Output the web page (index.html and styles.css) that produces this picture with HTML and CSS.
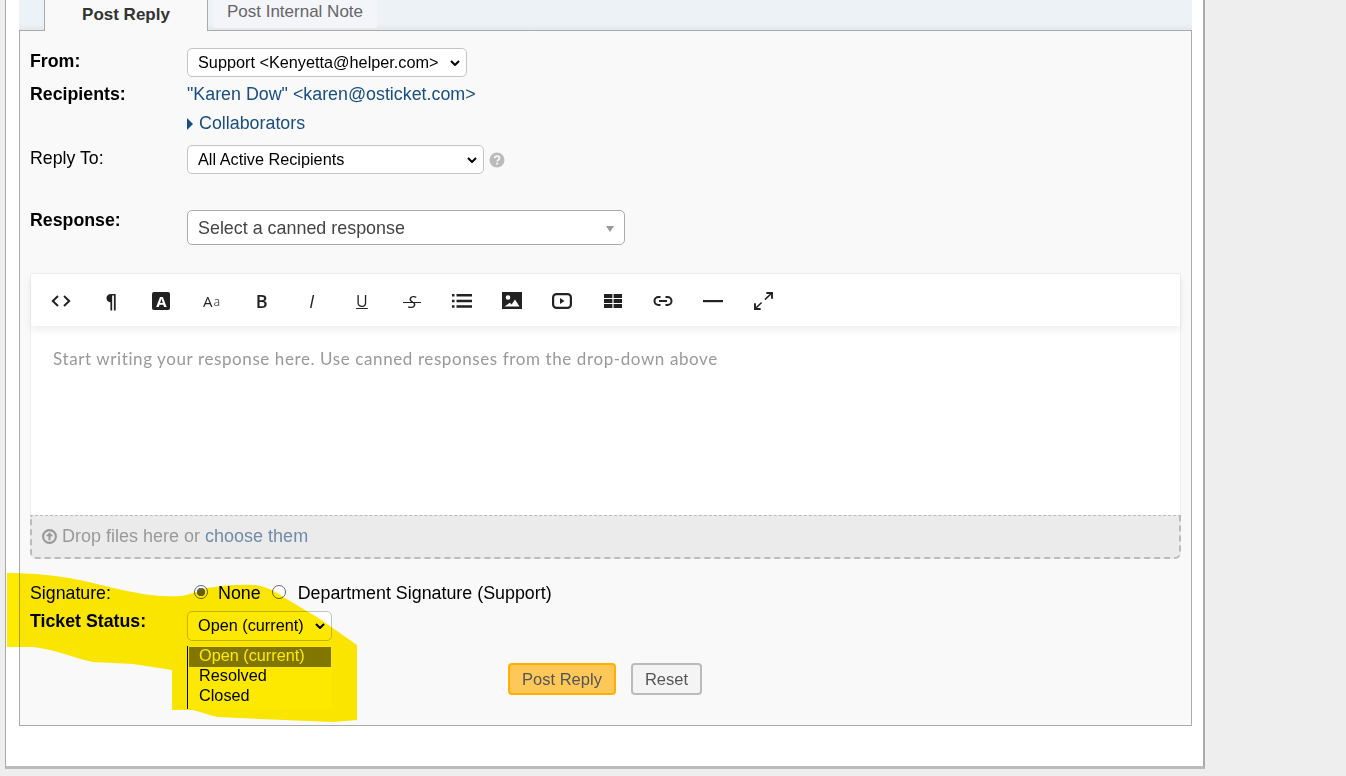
FILE: index.html
```html
<!DOCTYPE html>
<html lang="en">
<head>
    <meta charset="UTF-8">
    <title>Post Reply</title>
    <link rel="stylesheet" href="styles.css">
</head>
<body>
    <div id="page">
        <div class="tabs">
            <div class="tab active">Post Reply</div>
            <div class="tab">Post Internal Note</div>
        </div>
        <div class="panel">
            <div class="row row-from">
                <label class="lbl bold">From:</label>
                <div class="sel-wrap">
                    <select class="sel sel-from"><option>Support &lt;Kenyetta@helper.com&gt;</option></select>
                    <svg class="chev" width="10" height="6" viewBox="0 0 10 6"><path d="M1 1l4 4 4-4" fill="none" stroke="#000" stroke-width="2"/></svg>
                </div>
            </div>
            <div class="row row-text">
                <label class="lbl bold">Recipients:</label>
                <a class="link">"Karen Dow" &lt;karen@osticket.com&gt;</a>
            </div>
            <div class="row row-text row-collab">
                <span></span>
                <a class="link"><i class="caret"></i>Collaborators</a>
            </div>
            <div class="row row-reply">
                <label class="lbl">Reply To:</label>
                <div class="inline">
                    <div class="sel-wrap">
                        <select class="sel sel-reply"><option>All Active Recipients</option></select>
                        <svg class="chev" width="10" height="6" viewBox="0 0 10 6"><path d="M1 1l4 4 4-4" fill="none" stroke="#000" stroke-width="2"/></svg>
                    </div>
                    <svg class="help" width="16" height="16" viewBox="0 0 16 16"><circle cx="8" cy="8" r="7.5" fill="#bbb"/><path d="M5.6 6.2c.2-1.400 1.200-2.100 2.500-2.100 1.400 0 2.400.8 2.400 2 0 1.800-2.200 1.700-2.200 3.400" fill="none" stroke="#f9f9f9" stroke-width="1.800"/><rect x="7.200" y="10.700" width="1.900" height="1.900" fill="#f9f9f9"/></svg>
                </div>
            </div>
            <div class="row row-response">
                <label class="lbl bold">Response:</label>
                <div class="canned">Select a canned response<i class="canned-arrow"></i></div>
            </div>

            <div class="editor">
                <div class="toolbar">
                    <span class="tool"><svg width="20" height="12" viewBox="0 0 20 12"><path d="M7 1 1.800 6 7 11M13 1l5.200 5L13 11" fill="none" stroke="#222" stroke-width="2"/></svg></span>
                    <span class="tool tool-text para">¶</span>
                    <span class="tool"><span class="box-a">A</span></span>
                    <span class="tool tool-text size">A<small>a</small></span>
                    <span class="tool tool-text strong">B</span>
                    <span class="tool tool-text em">I</span>
                    <span class="tool tool-text under">U</span>
                    <span class="tool tool-text strike">S</span>
                    <span class="tool"><svg width="20" height="14" viewBox="0 0 20 14"><path d="M0 0h2.500v2.500H0zM0 5.700h2.500v2.500H0zM0 11.300h2.500v2.500H0zM4.500 0H20v2.500H4.500zM4.500 5.700H20v2.500H4.500zM4.500 11.300H20v2.500H4.500z" fill="#222"/></svg></span>
                    <span class="tool"><svg width="20" height="18" viewBox="0 0 20 18"><path fill-rule="evenodd" d="M0 0h20v17H0zM6 3.200a2.300 2.300 0 1 0 0 4.600 2.300 2.300 0 0 0 0-4.600zM2.500 14.500h15l-4.500-7-3.400 5-1.700-1.800z" fill="#222"/></svg></span>
                    <span class="tool"><svg width="20" height="16" viewBox="0 0 20 16"><rect x="1.100" y="1.100" width="17.800" height="13.800" rx="3.500" fill="none" stroke="#222" stroke-width="2.200"/><path d="M8 5v6l4.500-3z" fill="#222"/></svg></span>
                    <span class="tool"><svg width="18" height="14" viewBox="0 0 18 14"><path d="M0 0h8.400v4H0zM9.600 0H18v4H9.600zM0 5h8.400v4H0zM9.600 5H18v4H9.600zM0 10h8.400v4H0zM9.600 10H18v4H9.600z" fill="#222"/></svg></span>
                    <span class="tool"><svg width="20" height="12" viewBox="0 0 20 12"><path d="M7.500 2H5.500a4 4 0 0 0 0 8h2M12.500 2h2a4 4 0 0 1 0 8h-2" fill="none" stroke="#222" stroke-width="2"/><path d="M6 5h8v2H6z" fill="#222"/></svg></span>
                    <span class="tool"><svg width="20" height="3" viewBox="0 0 20 3"><path d="M0 0h20v2.200H0z" fill="#222"/></svg></span>
                    <span class="tool"><svg width="19" height="18" viewBox="0 0 20 19"><path d="M11.500 8 18 1.800M1.500 17.500 8 11" fill="none" stroke="#222" stroke-width="1.600"/><path d="M13 1h6v6M1 12v6h6" fill="none" stroke="#222" stroke-width="2"/></svg></span>
                </div>
                <div class="editor-body">Start writing your response here. Use canned responses from the drop-down above</div>
            </div>
            <div class="drop">
                <svg width="15" height="15" viewBox="0 0 14 14"><circle cx="7" cy="7" r="6" fill="none" stroke="#999" stroke-width="2"/><path d="M7 3 3.500 6.800H6V10.500h2V6.800h2.500z" fill="#999"/></svg>
                <span>Drop files here or <a class="choose">choose them</a></span>
            </div>

            <div class="row row-sign">
                <label class="lbl">Signature:</label>
                <div class="radios">
                    <i class="radio on"></i><span class="radio-none">None</span>
                    <i class="radio"></i><span>Department Signature (Support)</span>
                </div>
            </div>
            <div class="row row-status">
                <label class="lbl bold">Ticket Status:</label>
                <div class="sel-wrap">
                    <select class="sel sel-status"><option>Open (current)</option></select>
                    <svg class="chev" width="10" height="6" viewBox="0 0 10 6"><path d="M1 1l4 4 4-4" fill="none" stroke="#000" stroke-width="2"/></svg>
                </div>
                <ul class="options">
                    <li class="selected">Open (current)</li>
                    <li>Resolved</li>
                    <li>Closed</li>
                </ul>
            </div>
            <div class="buttons">
                <button class="btn primary">Post Reply</button>
                <button class="btn reset">Reset</button>
            </div>
        </div>
    </div>
    <!-- marker scribble drawn over the screenshot -->
    <svg class="marker" width="1346" height="776" viewBox="0 0 1346 776"><path d="M7 573C30 573 60 575 93 583 110 587 120 590 133 592 150 596 170 597 180 596 192 595 198 590 207 588 225 585 240 584 253 585 265 586 275 591 283 597 295 604 305 610 317 617L357 645V720L333 722 260 719 217 717 193 710H172V670L133 664 93 662C75 658 60 652 50 650 40 648 35 647 33 647H7z" fill="#ffeb00"/></svg>
</body>
</html>
```

FILE: styles.css
```css
*{
    box-sizing:border-box;
    padding:0;
    margin:0;
}
html,body{
    height:776px;
    overflow:hidden;
}
body{
    background-color:#eee;
    font-family:"Liberation Sans",Arial,sans-serif;
    font-size:17.750px;
    color:#000;
}
#page{
    width:1200px;
    height:769px;
    margin-left:5px;
    padding:0 11px 0 13px;
    background-color:#fff;
    border-left:1px solid #aaa;
    border-right:2px solid #aaa;
    border-bottom:3px solid #bbb;
}
.tabs{
    display:flex;
    align-items:flex-start;
    height:30px;
    padding-left:25px;
    background:linear-gradient(#edf2f6 80%,#e3e8ec);
    position:relative;
    z-index:1;
}
.tab{
    width:164px;
    height:28px;
    margin-right:5px;
    line-height:24px;
    text-align:center;
    font-size:17px;
    color:#666;
    background-color:#f3f5f9;
}
.tab.active{
    height:31px;
    line-height:29px;
    font-weight:bold;
    color:#333;
    background-color:#f9f9f9;
    border:1px solid #aaa;
    border-top:0;
    border-bottom:0;
}
.panel{
    height:696px;
    padding:17px 10px 0;
    background-color:#f9f9f9;
    border:1px solid #aaa;
}
.row{
    display:grid;
    grid-template-columns:157px auto;
    justify-content:start;
}
.lbl{
    line-height:26px;
}
.bold{
    font-weight:bold;
}
.sel-wrap{
    position:relative;
    height:29px;
}
.sel{
    display:block;
    height:29px;
    padding:0 0 2px 10px;
    font-family:"Liberation Sans",Arial,sans-serif;
    font-size:16.250px;
    color:#000;
    background-color:#fff;
    border:1px solid #c4c4c4;
    border-radius:5px;
    appearance:none;
    -webkit-appearance:none;
}
.chev{
    position:absolute;
    right:7px;
    top:12px;
    pointer-events:none;
}
.sel-from{
    width:280px;
}
.sel-reply{
    width:297px;
}
.row-text{
    height:29px;
    line-height:34px;
    font-size:17.850px;
}
.row-text .lbl{
    line-height:34px;
    font-size:17.750px;
}
.link{
    color:#184e81;
}
.caret{
    display:inline-block;
    margin-right:6px;
    border-left:6px solid #184e81;
    border-top:6px solid transparent;
    border-bottom:6px solid transparent;
    vertical-align:-1px;
}
.row-reply{
    margin-top:10px;
}
.row-reply .lbl{
    line-height:26px;
}
.inline{
    display:flex;
    align-items:center;
    gap:5px;
}
.row-response{
    margin-top:36px;
}
.row-response .lbl{
    line-height:20px;
}
.canned{
    display:flex;
    align-items:center;
    justify-content:space-between;
    width:438px;
    height:35px;
    padding:2px 10px 0;
    font-size:17.900px;
    color:#444;
    background-color:#fff;
    border:1px solid #aaa;
    border-radius:5px;
}
.canned-arrow{
    border-top:6px solid #999;
    border-left:4.500px solid transparent;
    border-right:4.500px solid transparent;
}
.editor{
    height:242px;
    margin-top:28px;
    background-color:#fff;
    border:1px solid #eee;
    border-bottom:0;
}
.toolbar{
    display:flex;
    align-items:center;
    height:52px;
    padding-left:5px;
    box-shadow:0 4px 8px rgba(0,0,0,0.07);
}
.tool{
    display:flex;
    align-items:center;
    justify-content:center;
    width:50.150px;
    height:52px;
    padding-top:2px;
    color:#222;
    position:relative;
}
.tool-text{
    font-family:"Open Sans",sans-serif;
    font-size:17px;
}
.para{
    font-family:"DejaVu Sans",sans-serif;
    font-size:19px;
    font-weight:bold;
}
.box-a{
    width:18px;
    height:18px;
    line-height:18px;
    text-align:center;
    font-family:"Open Sans",sans-serif;
    font-size:15px;
    font-weight:bold;
    color:#fff;
    background-color:#222;
    border-radius:2px;
}
.size{
    font-size:15px;
}
.size small{
    font-size:12px;
    color:#555;
    margin-left:1px;
}
.strong{
    font-weight:600;
    font-size:18px;
}
.em{
    font-style:italic;
    font-size:18px;
}
.under{
    text-decoration:underline;
    font-size:16px;
}
.strike{
    font-style:italic;
    font-size:17px;
}
.strike::after{
    content:"";
    position:absolute;
    left:16px;
    right:16px;
    top:28px;
    height:1px;
    background-color:#222;
}
.editor-body{
    padding:22px 22px 0;
    font-family:Lato,sans-serif;
    font-size:17px;
    letter-spacing:0.6px;
    color:#999;
}
.drop{
    display:flex;
    align-items:center;
    gap:5px;
    height:44px;
    padding-left:10px;
    font-size:18px;
    color:#999;
    background-color:#ebebeb;
    border:2px dashed #bbb;
    border-top-width:1px;
    border-radius:0 0 6px 6px;
}
.choose{
    color:#6f8ba5;
}
.row-sign{
    margin-top:21px;
    line-height:27px;
    font-size:17.850px;
}
.row-sign .lbl{
    font-size:17.750px;
}
.radios{
    display:flex;
    align-items:center;
}
.radio{
    display:block;
    width:14px;
    height:14px;
    margin:-3px 10px 0 7px;
    background-color:#fff;
    border:1px solid #666;
    border-radius:50%;
}
.radio.on{
    background:radial-gradient(circle,#666 0 4px,#fff 4.500px);
}
.radio-none{
    margin-right:4px;
}
.radio-none + .radio{
    margin-right:12px;
}
.row-status{
    margin-top:4px;
    position:relative;
}
.row-status .lbl{
    line-height:20px;
}
.row-status .sel-wrap{
    height:30px;
}
.sel-status{
    width:145px;
    height:30px;
    background-color:#fdfdfd;
}
.options{
    position:absolute;
    left:157px;
    top:35px;
    width:145px;
    height:63px;
    padding:1px 1px 0;
    list-style:none;
    font-size:16.250px;
    line-height:16px;
    background-color:#fdfdfd;
    border-left:1px solid #000;
}
.options li{
    height:20px;
    padding-left:10px;
}
.options .selected{
    color:#fff;
    background-color:#808080;
}
.buttons{
    display:flex;
    gap:15px;
    margin-top:22px;
    padding-left:478px;
}
.btn{
    height:32px;
    font-family:"Liberation Sans",Arial,sans-serif;
    font-size:16.500px;
    color:#555;
    background-color:#f4f4f4;
    border:2px solid #bbb;
    border-radius:4px;
}
.btn.primary{
    width:108px;
    background-color:#fec858;
    border-color:#ffb000;
}
.btn.reset{
    width:71px;
}
.marker{
    position:absolute;
    left:0;
    top:0;
    mix-blend-mode:multiply;
    pointer-events:none;
}
```
